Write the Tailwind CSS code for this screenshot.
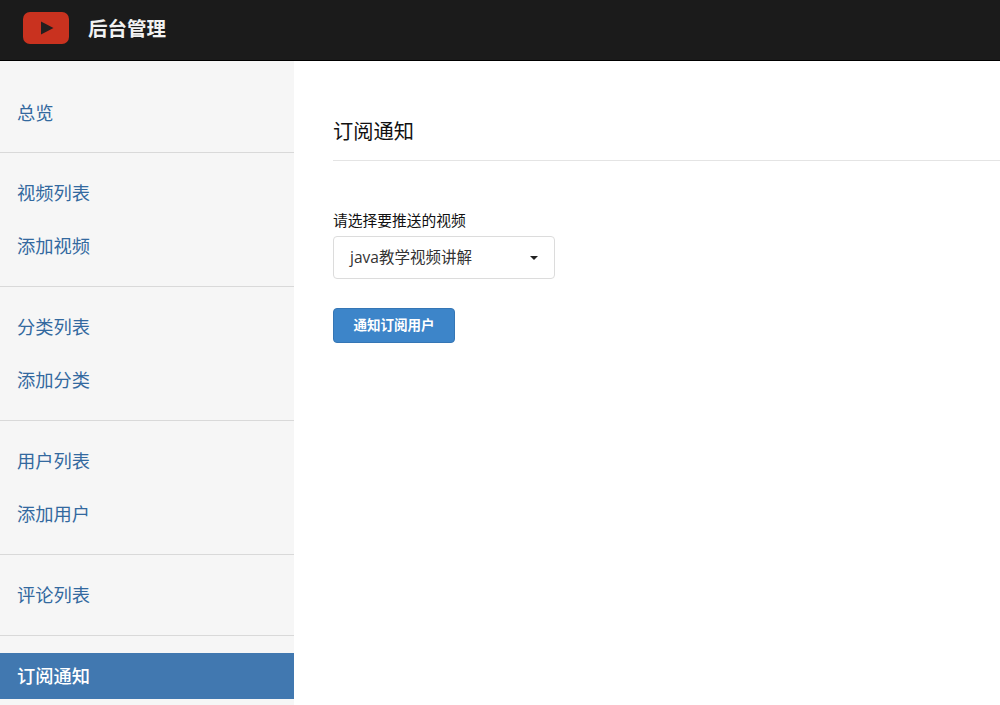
<!DOCTYPE html>
<html lang="zh">
<head>
    <meta charset="UTF-8">
    <title>后台管理</title>
    <script src="https://cdn.jsdelivr.net/npm/@tailwindcss/browser@4"></script>
</head>
<body class="bg-white h-[705px] overflow-hidden font-['Open_Sans','Noto_Sans_CJK_SC',sans-serif]">
    <header class="h-[61px] bg-[#1b1b1b] border-b border-black flex items-center pl-[23px]">
        <svg class="w-[46px] h-[32px] mb-[4px]" viewBox="0 0 46 32">
            <rect width="46" height="32" rx="7" fill="#c9321f"/>
            <path d="M18 9.5 L30.5 16 L18 22.5 Z" fill="#231f1f"/>
        </svg>
        <span class="ml-[19px] mb-[3px] text-[19.5px] font-bold text-[#f2f2f2]">后台管理</span>
    </header>

    <div class="flex h-[644px]">
        <aside class="w-[294px] bg-[#f6f6f6] shrink-0 text-[18.25px] text-[#33699f]">
            <div class="pt-[29px] pb-[16px] border-b border-[#d9d9d9]">
                <a class="h-[46px] flex items-center pl-[17px]">总览</a>
            </div>
            <div class="py-[17px] flex flex-col gap-[7px] border-b border-[#d9d9d9]">
                <a class="h-[46px] flex items-center pl-[17px]">视频列表</a>
                <a class="h-[46px] flex items-center pl-[17px]">添加视频</a>
            </div>
            <div class="py-[17px] flex flex-col gap-[7px] border-b border-[#d9d9d9]">
                <a class="h-[46px] flex items-center pl-[17px]">分类列表</a>
                <a class="h-[46px] flex items-center pl-[17px]">添加分类</a>
            </div>
            <div class="py-[17px] flex flex-col gap-[7px] border-b border-[#d9d9d9]">
                <a class="h-[46px] flex items-center pl-[17px]">用户列表</a>
                <a class="h-[46px] flex items-center pl-[17px]">添加用户</a>
            </div>
            <div class="py-[17px] border-b border-[#d9d9d9]">
                <a class="h-[46px] flex items-center pl-[17px]">评论列表</a>
            </div>
            <div class="pt-[17px]">
                <a class="h-[46px] flex items-center pl-[17px] bg-[#4178b0] text-white font-medium">订阅通知</a>
            </div>
        </aside>

        <main class="flex-1 pl-[39px]">
            <h1 class="mt-[55px] h-[45px] text-[20.25px] leading-[31px] font-normal text-[#111] border-b border-[#e4e4e4]">订阅通知</h1>
            <label class="block mt-[49px] text-[14.75px] leading-[20px] font-normal text-[#111]">请选择要推送的视频</label>
            <div class="mt-[6px] w-[222px] h-[43px] bg-white border border-[#dcdcdc] rounded-[4px] flex items-center justify-between pl-[16px] pr-[16px] text-[15.5px] text-[#333]">
                <span>java教学视频讲解</span>
                <span class="w-0 h-0 border-x-[4px] border-x-transparent border-t-[4px] border-t-[#222]"></span>
            </div>
            <button class="mt-[29px] w-[122px] h-[35px] bg-[#3d85c9] border border-[#3576b5] rounded-[4px] text-white text-[13.5px] font-bold flex items-center justify-center">通知订阅用户</button>
        </main>
    </div>
</body>
</html>
